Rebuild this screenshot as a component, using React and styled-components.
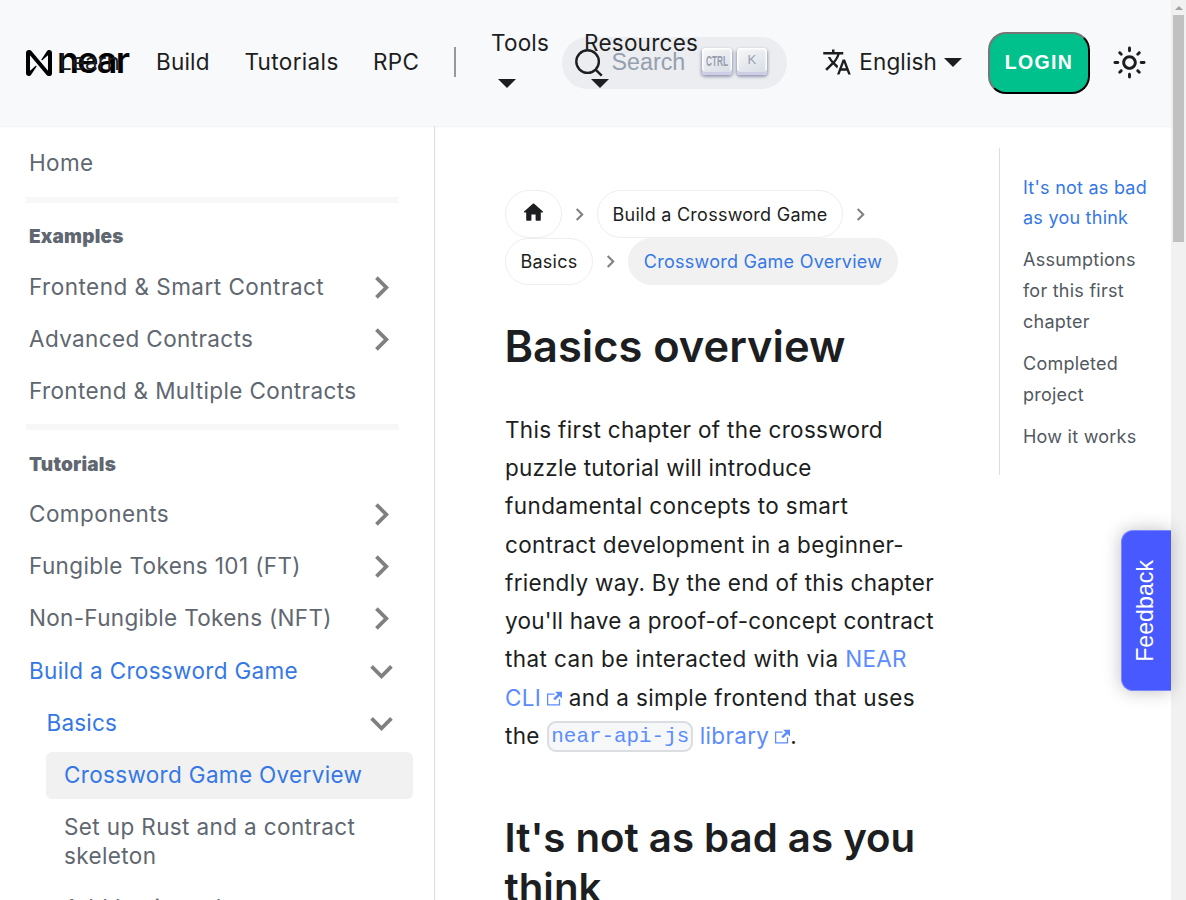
import React from 'react';
import styled, { createGlobalStyle, css } from 'styled-components';

const GlobalStyle = createGlobalStyle`
  * { box-sizing: border-box; }
  html, body { margin: 0; overflow: hidden; }
  body {
    background: #fff;
    color: #1c1e21;
    font: 400 22.5px/38.25px Inter, sans-serif;
  }
  a { color: inherit; text-decoration: none; }
`;

const Screen = styled.div`
  display: flex;
  width: 1186px;
  height: 900px;
  overflow: hidden;
`;

const Page = styled.div`
  position: relative;
  display: flex;
  flex-direction: column;
  width: 1171px;
  height: 900px;
`;

const ScrollTrack = styled.div`
  display: flex;
  flex-direction: column;
  align-items: center;
  width: 15px;
  background: #f1f1f1;
`;

const ScrollArrow = styled.div`
  height: 15px;
  padding-top: 6px;
  &::before {
    content: '';
    display: block;
    border: 4px solid transparent;
    border-top: 0;
    border-bottom: 4px solid #a3a3a3;
  }
`;

const ScrollThumb = styled.div`
  width: 11px;
  height: 227px;
  background: #c1c1c1;
`;

const Navbar = styled.header`
  display: flex;
  align-items: center;
  flex: none;
  height: 126px;
  padding-left: 26px;
  background: #f8f9fb;
  box-shadow: 0 1px 2px rgba(0, 0, 0, 0.06);
  white-space: nowrap;
`;

const Brand = styled.a`
  display: flex;
  flex: none;
  align-items: center;
  gap: 5px;
  width: 104px;
  height: 38px;
  margin-top: -1px;
  color: #000;
`;

const Wordmark = styled.span`
  font-size: 36px;
  font-weight: 600;
  letter-spacing: -1.9px;
  line-height: 38px;
  margin-top: -5px;
`;

const NavLink = styled.a`
  flex: none;
  width: ${(p) => p.$width}px;
  margin-left: ${(p) => p.$gap ?? 35.3}px;
  margin-top: -2px;
  letter-spacing: ${(p) => p.$tracking || 0}px;
`;

const NavDivider = styled.span`
  flex: none;
  width: 2px;
  height: 30px;
  margin: -2px 0 0 35px;
  background: #97989b;
`;

const Caret = styled.i`
  display: block;
  width: 18px;
  border: 9px solid transparent;
  border-top-color: currentColor;
  border-bottom: 0;
`;

const StackedLink = styled(NavLink)`
  display: flex;
  flex-direction: column;
  z-index: 1;
  margin-top: 0;
  height: 78px;
  ${Caret} { margin: 17px 0 0 6.7px; }
`;

const SearchBox = styled.div`
  display: flex;
  align-items: center;
  flex: none;
  width: 225px;
  height: 52px;
  margin-left: -136px;
  padding-left: 12px;
  border-radius: 26px;
  background: #ebedf0;
  color: #1c1e21;
  svg { flex: none; }
`;

const SearchLabel = styled.span`
  flex: none;
  width: 98px;
  padding-left: 7.5px;
  margin-top: -2px;
  font: 23.3px/28px 'Liberation Sans', sans-serif;
  color: #969faf;
`;

const Key = styled.kbd`
  display: flex;
  flex: none;
  width: 30px;
  height: 27px;
  margin: -4px 5px 0 0;
  padding: 1px 0 3px;
  border-radius: 4px;
  background: linear-gradient(-26.5deg, #d5dbe4, #f8f8f8);
  box-shadow: inset 0 -3px 0 0 #cdcde6, inset 0 0 1.5px 1.5px #fff,
    0 1.5px 3px 0.5px rgba(30, 35, 90, 0.4);
`;

const Language = styled.div`
  display: flex;
  align-items: center;
  gap: 7.5px;
  margin: -2px 0 0 34.8px;
  span { width: 77.5px; letter-spacing: 0.15px; }
`;

const Login = styled.button`
  width: 102px;
  height: 62px;
  margin-left: 25.7px;
  padding: 0 0 2px;
  border: 2px outset #1c1e21;
  border-color: #767676 #1c1e21 #1c1e21 #767676;
  border-radius: 18px;
  background: #00c08b;
  color: #fff;
  font: 700 19.5px/24px 'Liberation Sans', sans-serif;
  letter-spacing: 1.3px;
`;

const ThemeToggle = styled.span`
  display: flex;
  margin-left: 22px;
  margin-top: -1px;
`;

const Body = styled.div`
  display: flex;
  flex: 1;
  min-height: 0;
`;

const Sidebar = styled.nav`
  width: 435px;
  flex: none;
  padding: 14.4px 21px 0 11px;
  border-right: 1px solid #dadde1;
  color: #606770;
  overflow: hidden;
`;

const Item = styled.a`
  display: flex;
  align-items: center;
  justify-content: space-between;
  min-height: 46.7px;
  margin: 0 0 5.5px ${(p) => (p.$level || 0) * 17.5}px;
  padding: 9.1px 9.5px 8.7px 18px;
  border-radius: 6px;
  line-height: 28.9px;
  letter-spacing: ${(p) => p.$tracking ?? 0.38}px;
  color: ${(p) => (p.$on ? '#3578e5' : 'inherit')};
  background: ${(p) => (p.$selected ? '#f1f1f1' : 'none')};
  svg { margin: -9px 0; flex: none; }
`;

const Rule = styled.div`
  height: 6px;
  width: ${(p) => p.$width || 372}px;
  margin: 9.8px 0 10.2px 15px;
  background: #f7f7f7;
`;

const Heading = styled.div`
  height: 47px;
  margin: 0 0 3.4px 18px;
  font-size: 19px;
  font-weight: 900;
  line-height: 47px;
  letter-spacing: 0.2px;
`;

const Article = styled.main`
  width: 435px;
  margin: 64px 0 0 70px;
  flex: none;
  white-space: nowrap;
`;

const Crumbs = styled.ul`
  display: flex;
  flex-wrap: wrap;
  align-items: center;
  margin: 0;
  padding: 0;
  list-style: none;
  font-size: 18px;
  line-height: 30.6px;
  letter-spacing: 0.26px;
`;

const Crumb = styled.li`
  display: flex;
  align-items: center;
`;

const Pill = styled.span`
  display: flex;
  align-items: center;
  justify-content: center;
  width: ${(p) => p.$width}px;
  height: 47.5px;
  padding-top: ${(p) => (p.$icon ? 0 : 2.6)}px;
  border: 1px solid #eeeeee;
  border-radius: 24px;
  ${(p) => p.$active && css`
    background: #f1f1f1;
    border-color: #f1f1f1;
    color: #3578e5;
  `}
  svg { margin: -2px 1px 0 0; }
`;

const CrumbArrow = styled.span`
  display: flex;
  width: 35px;
  padding: 1px 1px 0 0;
  justify-content: center;
`;

const Title = styled.h1`
  margin: 33px 0 0 -0.5px;
  font-size: 43.4px;
  font-weight: 600;
  line-height: 56px;
`;

const Paragraph = styled.p`
  margin: 36.95px 0 0;
`;

const Run = styled.span`
  letter-spacing: ${(p) => p.$tracking}px;
`;

const Link = styled.a`
  color: #5b8cff;
  letter-spacing: 0.3px;
  svg { margin-left: 6px; }
`;

const Code = styled.code`
  position: relative;
  top: -1px;
  margin-left: 1px;
  padding: 2px;
  border: 2px solid #dadde1;
  border-radius: 9px;
  background: #f6f7f8;
  font: 20.9px/25px 'Liberation Mono', monospace;
  letter-spacing: 0;
  vertical-align: middle;
`;

const Subtitle = styled.h2`
  margin: 57.5px 0 0 -0.5px;
  font-size: 40.2px;
  font-weight: 600;
  line-height: 50.5px;
`;

const Toc = styled.aside`
  display: flex;
  flex-direction: column;
  gap: 11.4px;
  width: 172px;
  height: 327px;
  margin: 22px 0 0 59px;
  padding: 24.6px 0 0 23px;
  border-left: 1px solid #dadde1;
  font-size: 18px;
  line-height: 30.75px;
  letter-spacing: 0.24px;
  color: #525860;
  white-space: nowrap;
`;

const TocLink = styled.a`
  color: ${(p) => (p.$on ? '#3578e5' : 'inherit')};
`;

const Feedback = styled.button`
  position: absolute;
  right: 0;
  top: 530px;
  display: flex;
  align-items: center;
  justify-content: center;
  width: 50px;
  height: 161px;
  padding: 0 3px 0 0;
  border: 1px solid #7a87ff;
  border-right: 0;
  border-radius: 12px 0 0 12px;
  background: #485aff;
  box-shadow: 0 0 18px rgba(0, 0, 0, 0.25);
  color: #fff;
  font: 23.2px/28px 'Liberation Sans', sans-serif;
  span {
    writing-mode: vertical-rl;
    transform: rotate(180deg);
  }
`;

const NearMark = () => (
  <svg width="26" height="26" viewBox="0 0 90 90" fill="currentColor">
    <path d="M72.2 4.6L53.4 32.5c-1.3 1.9 1.2 4.2 3 2.6L74.9 19c.5-.4 1.2-.1 1.2.6v50.3c0 .7-.9 1-1.3.5l-56-67C17 1.2 14.4 0 11.5 0h-2C4.3 0 0 4.3 0 9.6v70.8C0 85.7 4.3 90 9.6 90c3.3 0 6.4-1.7 8.2-4.6l18.8-27.9c1.3-1.9-1.2-4.2-3-2.6L15.1 71c-.5.4-1.2.1-1.2-.6V20.1c0-.7.9-1 1.3-.5l56 67c1.8 2.2 4.5 3.4 7.3 3.4h2c5.3 0 9.6-4.3 9.6-9.6V9.6c0-5.3-4.3-9.6-9.6-9.6-3.4 0-6.5 1.7-8.3 4.6z" />
  </svg>
);

const SearchIcon = () => (
  <svg width="30" height="30" viewBox="0 0 20 20" fill="none" stroke="currentColor" strokeWidth="1.6">
    <path d="M14.386 14.386l4.0877 4.0877-4.0877-4.0877c-2.9418 2.9419-7.7115 2.9419-10.6533 0-2.9419-2.9418-2.9419-7.7115 0-10.6533 2.9418-2.9419 7.7115-2.9419 10.6533 0 2.9419 2.9418 2.9419 7.7115 0 10.6533z" />
  </svg>
);

const TranslateIcon = () => (
  <svg width="30" height="30" viewBox="0 0 24 24" fill="currentColor">
    <path d="M12.87 15.07l-2.54-2.51.03-.03c1.74-1.94 2.98-4.17 3.71-6.53H17V4h-7V2H8v2H1v1.99h11.17C11.5 7.92 10.44 9.75 9 11.35 8.07 10.32 7.3 9.19 6.69 8h-2c.73 1.63 1.73 3.17 2.98 4.56l-5.09 5.02L4 19l5-5 3.11 3.11.76-2.04zM18.5 10h-2L12 22h2l1.12-3h4.75L21 22h2l-4.5-12zm-2.62 7l1.62-4.33L19.12 17h-3.24z" />
  </svg>
);

const SunIcon = () => (
  <svg width="35" height="35" viewBox="0 0 24 24" fill="currentColor">
    <path d="M12,9c1.65,0,3,1.35,3,3s-1.35,3-3,3s-3-1.35-3-3S10.35,9,12,9 M12,7c-2.76,0-5,2.24-5,5s2.24,5,5,5s5-2.24,5-5 S14.76,7,12,7L12,7z M2,13l2,0c0.55,0,1-0.45,1-1s-0.45-1-1-1l-2,0c-0.55,0-1,0.45-1,1S1.45,13,2,13z M20,13l2,0c0.55,0,1-0.45,1-1 s-0.45-1-1-1l-2,0c-0.55,0-1,0.45-1,1S19.45,13,20,13z M11,2v2c0,0.55,0.45,1,1,1s1-0.45,1-1V2c0-0.55-0.45-1-1-1S11,1.45,11,2z M11,20v2c0,0.55,0.45,1,1,1s1-0.45,1-1v-2c0-0.55-0.45-1-1-1C11.45,19,11,19.45,11,20z M5.99,4.58c-0.39-0.39-1.03-0.39-1.41,0 c-0.39,0.39-0.39,1.03,0,1.41l1.06,1.06c0.39,0.39,1.03,0.39,1.41,0s0.39-1.03,0-1.41L5.99,4.58z M18.36,16.95 c-0.39-0.39-1.03-0.39-1.41,0c-0.39,0.39-0.39,1.03,0,1.41l1.06,1.06c0.39,0.39,1.03,0.39,1.41,0c0.39-0.39,0.39-1.03,0-1.41 L18.36,16.95z M19.42,5.99c0.39-0.39,0.39-1.03,0-1.41c-0.39-0.39-1.03-0.39-1.41,0l-1.06,1.06c-0.39,0.39-0.39,1.03,0,1.41 s1.03,0.39,1.41,0L19.42,5.99z M7.05,18.36c0.39-0.39,0.39-1.03,0-1.41c-0.39-0.39-1.03-0.39-1.41,0l-1.06,1.06 c-0.39,0.39-0.39,1.03,0,1.41s1.03,0.39,1.41,0L7.05,18.36z" />
  </svg>
);

const HomeIcon = () => (
  <svg width="25" height="25" viewBox="0 0 24 24" fill="currentColor">
    <path d="M10 19v-5h4v5c0 .55.45 1 1 1h3c.55 0 1-.45 1-1v-7h1.7c.46 0 .68-.57.33-.87L12.67 3.6c-.38-.34-.96-.34-1.34 0l-8.36 7.53c-.34.3-.13.87.33.87H5v7c0 .55.45 1 1 1h3c.55 0 1-.45 1-1z" />
  </svg>
);

const Chevron = ({ size, down }) => (
  <svg width={size} height={size} viewBox="0 0 24 24" fill="#808080">
    <path
      d="M7.41 15.41L12 10.83l4.59 4.58L18 14l-6-6-6 6z"
      transform={`rotate(${down ? 180 : 90} 12 12)`}
    />
  </svg>
);

const ExternalIcon = () => (
  <svg width="15" height="15" viewBox="0 0 24 24" fill="currentColor">
    <path d="M21 13v10h-21v-19h12v2h-10v15h17v-8h2zm3-12h-10.988l4.035 4-6.977 7.07 2.828 2.828 6.977-7.07 4.125 4.172v-11z" />
  </svg>
);

const KeyCap = ({ label, size, weight, width, y }) => (
  <Key>
    <svg width="30" height="23" viewBox="0 0 30 23">
      <text
        x="15" y={y} textAnchor="middle" fill="#969faf" fontSize={size} fontWeight={weight}
        fontFamily="Liberation Sans" textLength={width} lengthAdjust="spacingAndGlyphs"
      >
        {label}
      </text>
    </svg>
  </Key>
);

const examples = [
  { label: 'Frontend & Smart Contract', arrow: true, tracking: 0.48 },
  { label: 'Advanced Contracts', arrow: true },
  { label: 'Frontend & Multiple Contracts' },
];

const tutorials = [
  { label: 'Components', arrow: true, tracking: 0.45 },
  { label: 'Fungible Tokens 101 (FT)', arrow: true },
  { label: 'Non-Fungible Tokens (NFT)', arrow: true, tracking: 0.31 },
  { label: 'Build a Crossword Game', arrow: true, on: true, tracking: 0.33 },
  { label: 'Basics', arrow: true, on: true, level: 1, tracking: 0.2 },
  { label: 'Crossword Game Overview', on: true, level: 2, selected: true, tracking: 0.33 },
  { label: 'Set up Rust and a contract skeleton', level: 2 },
  { label: 'Add basic code, create a subaccount', level: 2 },
];

const Items = ({ list }) =>
  list.map((item) => (
    <Item
      key={item.label}
      $on={item.on}
      $level={item.level}
      $selected={item.selected}
      $tracking={item.tracking}
    >
      {item.label}
      {item.arrow && <Chevron size={45} down={item.on} />}
    </Item>
  ));

export default function App() {
  return (
    <Screen>
      <GlobalStyle />
      <Page>
        <Navbar>
          <Brand>
            <NearMark />
            <Wordmark>near</Wordmark>
          </Brand>
          <NavLink $gap={-71} $width={61}>Learn</NavLink>
          <NavLink $gap={36} $width={54} $tracking={0.2}>Build</NavLink>
          <NavLink $width={93} $gap={34.4} $tracking={0.36}>Tutorials</NavLink>
          <NavLink $width={46} $gap={35.6} $tracking={0.3}>RPC</NavLink>
          <NavDivider />
          <StackedLink $width={57} $gap={35} $tracking={0.2}>Tools<Caret /></StackedLink>
          <StackedLink $width={114} $gap={36} $tracking={0.25}>Resources<Caret /></StackedLink>
          <SearchBox>
            <SearchIcon />
            <SearchLabel>Search</SearchLabel>
            <KeyCap label="CTRL" size={14.5} weight={700} width={22} y={16.5} />
            <KeyCap label="K" size={13.3} weight={400} width={8.8} y={15} />
          </SearchBox>
          <Language>
            <TranslateIcon />
            <span>English</span>
            <Caret />
          </Language>
          <Login>LOGIN</Login>
          <ThemeToggle><SunIcon /></ThemeToggle>
        </Navbar>
        <Body>
          <Sidebar>
            <Item>Home</Item>
            <Rule />
            <Heading>Examples</Heading>
            <Items list={examples} />
            <Rule $width={373} />
            <Heading>Tutorials</Heading>
            <Items list={tutorials} />
          </Sidebar>
          <Article>
            <Crumbs>
              <Crumb><Pill $width={57} $icon><HomeIcon /></Pill><CrumbArrow><Chevron size={25} /></CrumbArrow></Crumb>
              <Crumb><Pill $width={246}>Build a Crossword Game</Pill><CrumbArrow><Chevron size={25} /></CrumbArrow></Crumb>
              <Crumb><Pill $width={88}>Basics</Pill><CrumbArrow><Chevron size={25} /></CrumbArrow></Crumb>
              <Crumb><Pill $width={270} $active>Crossword Game Overview</Pill></Crumb>
            </Crumbs>
            <Title>Basics overview</Title>
            <Paragraph>
              <Run $tracking={0.32}>This first chapter of the crossword</Run><br />
              <Run $tracking={0.27}>puzzle tutorial will introduce</Run><br />
              <Run $tracking={0.41}>fundamental concepts to smart</Run><br />
              <Run $tracking={0.35}>contract development in a beginner-</Run><br />
              <Run $tracking={0.31}>friendly way. By the end of this chapter</Run><br />
              <Run $tracking={0.25}>you'll have a proof-of-concept contract</Run><br />
              <Run $tracking={0.42}>that can be interacted with via </Run><Link>NEAR<br />
              CLI<ExternalIcon /></Link><Run $tracking={0.37}> and a simple frontend that uses</Run><br />
              <Run $tracking={0.3}>the </Run><Link><Code>near-api-js</Code> library<ExternalIcon /></Link>.
            </Paragraph>
            <Subtitle>It's not as bad as you<br />think</Subtitle>
          </Article>
          <Toc>
            <TocLink $on>It's not as bad<br />as you think</TocLink>
            <TocLink>Assumptions<br />for this first<br />chapter</TocLink>
            <TocLink>Completed<br />project</TocLink>
            <TocLink>How it works</TocLink>
          </Toc>
        </Body>
        <Feedback><span>Feedback</span></Feedback>
      </Page>
      <ScrollTrack>
        <ScrollArrow />
        <ScrollThumb />
      </ScrollTrack>
    </Screen>
  );
}
